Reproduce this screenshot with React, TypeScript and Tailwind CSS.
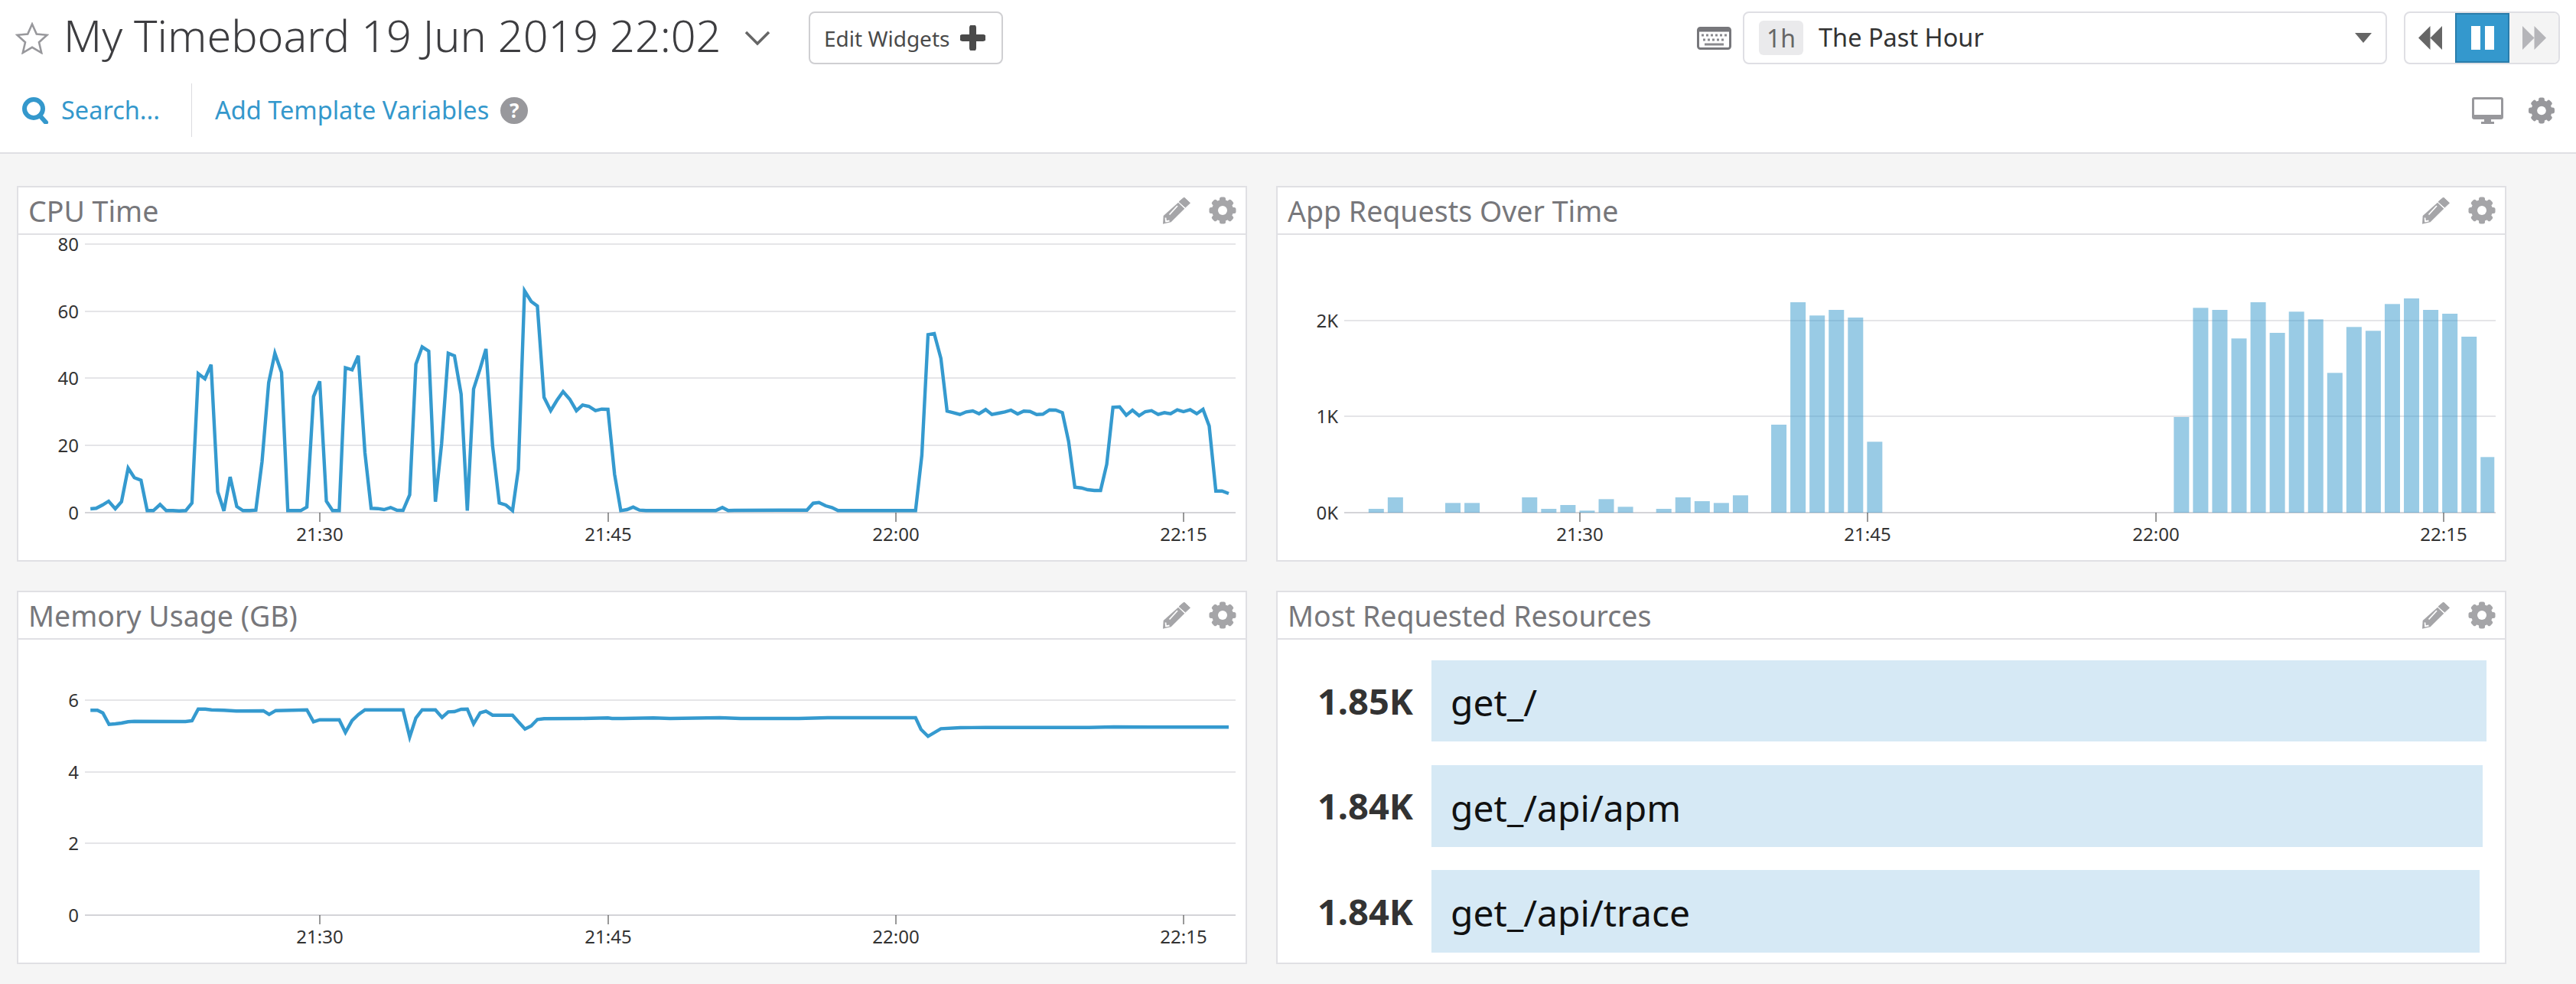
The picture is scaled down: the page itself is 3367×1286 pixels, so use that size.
import type { ReactNode } from "react";

type Pt = [number, number];

const LEFT_X = 1.845;
const toPage = (pts: number[], xBase: number, yBase: number): Pt[] => {
  const out: Pt[] = [];
  for (let i = 0; i < pts.length; i += 2) out.push([xBase + pts[i] / LEFT_X, yBase + pts[i + 1] / 3]);
  return out;
};
const toPoints = (pts: Pt[]) => pts.map(([x, y]) => `${x.toFixed(1)},${y.toFixed(1)}`).join(" ");

const cpu: Pt[] = [
  ...toPage(
    [
      218, 1305, 232, 1303, 247, 1290, 262, 1275, 278, 1305, 293, 1277, 309, 1145, 324, 1183, 340, 1193, 355, 1312,
      370, 1312, 386, 1288, 401, 1312, 417, 1312, 432, 1313, 448, 1312, 463, 1282, 478, 775, 494, 795, 509, 740, 525,
      1238, 540, 1313, 555, 1180, 571, 1296, 586, 1312, 602, 1312, 617, 1310, 632, 1120, 648, 810, 663, 695, 679, 770,
      694, 1312, 710, 1312, 725, 1312, 740, 1298, 756, 865, 771, 805, 787, 1275, 802, 1312, 818, 1312, 833, 752, 849,
      760, 864, 705, 880, 1085, 895, 1303, 911, 1304, 926, 1308, 942, 1300, 957, 1310, 972, 1311, 988, 1250, 1003, 738,
      1018, 670, 1034, 687, 1050, 1277, 1065, 1050, 1081, 695, 1096, 705, 1112, 855, 1127, 1312, 1142, 835, 1158, 755,
      1172, 678, 1188, 1060, 1204, 1282, 1220, 1290, 1236, 1312, 1250, 1150, 1265, 450, 1281, 492, 1296, 510, 1312,
      868, 1328, 920, 1343, 880, 1358, 845, 1374, 875, 1390, 920, 1405, 898, 1420, 903, 1436, 920, 1451, 914, 1466,
      915, 1482, 1170,
    ],
    0,
    230,
  ),
  ...toPage(
    [
      21, 1312, 36, 1308, 51, 1298, 66, 1310, 82, 1312, 250, 1312, 266, 1300, 280, 1312, 295, 1311, 470, 1310, 485,
      1283, 499, 1280, 515, 1293, 530, 1300, 545, 1312, 732, 1312, 747, 1095, 762, 622, 777, 618, 793, 715, 808, 922,
      823, 928, 839, 935, 854, 925, 870, 921, 885, 932, 901, 916, 916, 935, 932, 930, 947, 925, 962, 918, 978, 933,
      993, 922, 1008, 923, 1024, 935, 1039, 934, 1055, 917, 1070, 918, 1086, 928, 1101, 1040, 1116, 1220, 1132, 1223,
      1147, 1230, 1163, 1233, 1178, 1233, 1193, 1130, 1208, 907, 1224, 905, 1240, 938, 1255, 918, 1271, 940, 1286, 924,
      1301, 920, 1317, 935, 1332, 928, 1347, 932, 1363, 917, 1378, 924, 1394, 916, 1410, 932, 1425, 915, 1440, 980,
      1456, 1235, 1471, 1235, 1487, 1245,
    ],
    800,
    230,
  ),
];

const memory: Pt[] = [
  ...toPage(
    [
      218, 505, 235, 505, 248, 515, 263, 560, 278, 558, 293, 555, 309, 550, 324, 548, 447, 549, 463, 546, 478, 500, 495,
      500, 510, 503, 540, 505, 570, 508, 635, 507, 649, 521, 665, 506, 740, 503, 756, 550, 771, 542, 818, 542, 833, 592,
      849, 545, 864, 522, 880, 503, 972, 503, 988, 610, 1003, 535, 1018, 503, 1050, 503, 1066, 533, 1081, 511, 1096,
      510, 1112, 501, 1127, 500, 1142, 558, 1158, 515, 1172, 508, 1188, 524, 1236, 524, 1250, 550, 1266, 578, 1281, 566,
      1296, 541, 1312, 538, 1400, 537, 1466, 535,
    ],
    0,
    760,
  ),
  ...toPage(
    [
      0, 537, 25, 537, 100, 535, 140, 537, 260, 534, 310, 537, 450, 537, 520, 534, 732, 534, 745, 580, 762, 607, 793,
      577, 840, 573, 900, 572, 1150, 572, 1210, 570, 1300, 571, 1487, 571,
    ],
    800,
    760,
  ),
];

// [slot, top] in the crop's scale; empty slots are simply missing
const bars: [number, number][] = [
  [0, 1305], [1, 1260], [4, 1282], [5, 1282], [8, 1260], [9, 1305], [10, 1290], [11, 1312], [12, 1267], [13, 1297],
  [15, 1305], [16, 1260], [17, 1275], [18, 1282], [19, 1252], [21, 975], [22, 495], [23, 547], [24, 525], [25, 555],
  [26, 1042], [42, 945], [43, 517], [44, 525], [45, 637], [46, 495], [47, 615], [48, 532], [49, 562], [50, 772],
  [51, 592], [52, 607], [53, 502], [54, 480], [55, 525], [56, 540], [57, 630], [58, 1102],
];

const resources = [
  { value: "1.85K", name: "get_/", bar: "w-[1379px]", gap: "mt-[27px]", h: "h-[106px]" },
  { value: "1.84K", name: "get_/api/apm", bar: "w-[1374px]", gap: "mt-[31px]", h: "h-[107px]" },
  { value: "1.84K", name: "get_/api/trace", bar: "w-[1370px]", gap: "mt-[30px]", h: "h-[108px]" },
];

function Gear({ className, color = "#a5a5a8" }: { className: string; color?: string }) {
  return (
    <svg viewBox="0 0 36 36" className={className}>
      {[0, 45, 90, 135].map((a) => (
        <rect key={a} x="14" y="0.5" width="8" height="35" rx="2.5" fill={color} transform={`rotate(${a} 18 18)`} />
      ))}
      <circle cx="18" cy="18" r="10" fill="none" stroke={color} strokeWidth="8" />
      <circle cx="18" cy="18" r="6" fill="#fff" />
    </svg>
  );
}

function Pencil() {
  return (
    <svg viewBox="0 0 37 35" className="h-[35px] w-[37px]">
      <path d="M28.7 0 36.5 7.3 30.4 13 22 5.7Z" fill="#a5a5a8" strokeLinejoin="round" stroke="#a5a5a8" />
      <path d="M21 6.7 29.3 14.7 11.6 32.3 1 34.7 1.7 24Z" fill="#a5a5a8" />
      <path d="M20 11 9.5 22.5" stroke="#fff" strokeWidth="1.8" fill="none" />
      <path d="M4.5 26.5 5 31.5 9.5 30.5" stroke="#fff" strokeWidth="1.8" fill="none" />
    </svg>
  );
}

function Widget({ title, height, children }: { title: string; height: string; children: ReactNode }) {
  return (
    <section className={`flex flex-col border-2 border-[#e0e0e4] bg-white ${height}`}>
      <div className="flex h-[62px] shrink-0 items-center justify-between border-b-2 border-[#e0e0e4] pl-[13px] pr-[12px]">
        <span className="pt-[2px] text-[37.5px] text-[#77777b]">{title}</span>
        <div className="flex items-center gap-[24px]">
          <Pencil />
          <Gear className="h-[36px] w-[36px]" />
        </div>
      </div>
      <div className="min-h-0 flex-1">{children}</div>
    </section>
  );
}

type ChartProps = {
  box: string;
  left: number;
  right: number;
  grid: { y: number; label: string }[];
  ticks: { x: number; label: string }[];
  labelY: number;
  children: ReactNode;
};

// viewBox is in page coordinates, so traced values can be used as they are
function Chart({ box, left, right, grid, ticks, labelY, children }: ChartProps) {
  const zero = grid[grid.length - 1].y;
  return (
    <svg viewBox={box} className="block h-full w-full overflow-visible">
      {grid.map((g, i) => (
        <g key={g.label}>
          <line
            x1={left}
            x2={right}
            y1={g.y}
            y2={g.y}
            stroke={i === grid.length - 1 ? "#d4d4d8" : "#dcdce0"}
            strokeWidth={i === grid.length - 1 ? 2 : 1.4}
          />
          <text x={left - 8} y={g.y + 9} textAnchor="end" className="fill-[#333] text-[24px]">
            {g.label}
          </text>
        </g>
      ))}
      {ticks.map((t) => (
        <g key={t.label}>
          <line x1={t.x} x2={t.x} y1={zero} y2={zero + 12} stroke="#333" strokeWidth="1" />
          <text x={t.x} y={labelY} textAnchor="middle" className="fill-[#333] text-[24px]">
            {t.label}
          </text>
        </g>
      ))}
      {children}
    </svg>
  );
}

const Series = ({ pts }: { pts: Pt[] }) => (
  <polyline points={toPoints(pts)} fill="none" stroke="#359acf" strokeWidth="4.4" strokeLinejoin="miter" />
);

const timeLabels = ["21:30", "21:45", "22:00", "22:15"];

export default function App() {
  return (
    <div className="min-h-[1286px] w-[3367px] bg-[#f5f5f5] [font-family:'Noto_Sans',sans-serif]">
      <header className="border-b-2 border-[#dfdfe4] bg-white pb-[20px] pt-[15px]">
        <div className="flex h-[69px] items-center justify-between pl-[20px] pr-[21px]">
          <div className="flex items-center">
            <svg viewBox="0 0 44 42" className="h-[42px] w-[44px]">
              <path
                d="M22 2.5 27.8 15.6 41.5 16.8 31 26.2 34.2 40 22 32.8 9.8 40 13 26.2 2.5 16.8 16.2 15.6Z"
                fill="none"
                stroke="#98989c"
                strokeWidth="2.6"
              />
            </svg>
            <h1 className="ml-[19px] w-[890px] whitespace-nowrap pb-[6px] text-[57.5px] font-light leading-none text-[#3d3d40]">
              My Timeboard 19 Jun 2019 22:02
            </h1>
            <svg viewBox="0 0 34 20" className="h-[20px] w-[34px]">
              <path d="M2 2 17 17 32 2" fill="none" stroke="#666" strokeWidth="3.5" />
            </svg>
            <button className="ml-[50px] flex h-[69px] w-[254px] items-center rounded-lg border-2 border-[#cfcfd2] pl-[18px] text-[28px] text-[#4a4a4a]">
              Edit Widgets
              <svg viewBox="0 0 33 33" className="ml-[14px] h-[33px] w-[33px]">
                <path d="M16.5 3V30M3 16.5H30" stroke="#4a4a4a" strokeWidth="9" strokeLinecap="round" />
              </svg>
            </button>
          </div>
          <div className="flex items-center">
            <svg viewBox="0 0 45 30" className="h-[30px] w-[45px]">
              <rect x="1.5" y="1.5" width="42" height="27" rx="3" fill="#fff" stroke="#77777b" strokeWidth="3" />
              <rect x="1.5" y="1.5" width="42" height="5" fill="#77777b" />
              <path d="M6 11H39M8 17H37" stroke="#8a8a8e" strokeWidth="3" strokeDasharray="3 3" fill="none" />
              <path d="M10 23H35" stroke="#8a8a8e" strokeWidth="3" fill="none" />
            </svg>
            <div className="ml-[15px] flex h-[69px] w-[842px] items-center rounded-lg border-2 border-[#dfdfe4] pl-[19px] pr-[18px]">
              <span className="flex h-[45px] w-[58px] items-center justify-center rounded-md bg-[#eaeaec] text-[32px] text-[#666]">
                1h
              </span>
              <span className="ml-[20px] text-[32.5px] text-[#333]">The Past Hour</span>
              <svg viewBox="0 0 22 13" className="ml-auto h-[13px] w-[22px]">
                <path d="M0 0H22L11 13Z" fill="#666" />
              </svg>
            </div>
            <div className="ml-[22px] flex h-[69px] w-[204px] overflow-hidden rounded-lg border-2 border-[#dfdfe4]">
              <div className="flex w-[65px] items-center justify-center">
                <svg viewBox="0 0 31 31" className="h-[31px] w-[31px]">
                  <path d="M0 15.5 15.5 0V31ZM15.5 15.5 31 0V31Z" fill="#666" />
                </svg>
              </div>
              <div className="flex w-[71px] items-center justify-center border-2 border-[#2a7dab] bg-[#3498cd]">
                <svg viewBox="0 0 30 31" className="h-[31px] w-[30px]">
                  <path d="M0 0H12V31H0ZM18 0H30V31H18Z" fill="#fff" />
                </svg>
              </div>
              <div className="flex flex-1 items-center justify-center bg-[#f4f4f4]">
                <svg viewBox="0 0 31 31" className="h-[31px] w-[31px]">
                  <path d="M0 0 15.5 15.5 0 31ZM15.5 0 31 15.5 15.5 31Z" fill="#b5b5b9" />
                </svg>
              </div>
            </div>
          </div>
        </div>
        <div className="mt-[25px] flex h-[70px] items-center justify-between pl-[29px] pr-[27px]">
          <div className="flex h-full items-center text-[32.5px] text-[#3498cc]">
            <svg viewBox="0 0 35 35" className="h-[35px] w-[35px]">
              <circle cx="15" cy="15" r="12" fill="none" stroke="#3498cc" strokeWidth="6" />
              <path d="M23 24 31 33" stroke="#3498cc" strokeWidth="6" strokeLinecap="round" />
            </svg>
            <span className="ml-[16px]">Search...</span>
            <div className="ml-[41px] h-full w-px bg-[#dcdce0]" />
            <span className="ml-[30px]">Add Template Variables</span>
            <span className="ml-[15px] flex h-[35px] w-[36px] items-center justify-center rounded-full bg-[#98989c] text-[26px] font-bold text-white">
              ?
            </span>
          </div>
          <div className="flex items-center gap-[32px]">
            <svg viewBox="0 0 41 35" className="h-[35px] w-[41px]">
              <path d="M3 0H38Q41 0 41 3V26Q41 29 38 29H25V32H29V35H12V32H16V29H3Q0 29 0 26V3Q0 0 3 0Z" fill="#98989c" />
              <rect x="3" y="3" width="35" height="20" fill="#fff" />
            </svg>
            <Gear className="h-[35px] w-[36px]" color="#98989c" />
          </div>
        </div>
      </header>

      <main className="grid grid-cols-[1608px_1608px] gap-[38px] pl-[22px] pt-[42px]">
        <Widget title="CPU Time" height="h-[491px]">
          <Chart
            box="24 307 1604 425"
            left={111}
            right={1615}
            labelY={707}
            grid={[
              { y: 319, label: "80" },
              { y: 407, label: "60" },
              { y: 494, label: "40" },
              { y: 582, label: "20" },
              { y: 670, label: "0" },
            ]}
            ticks={[418, 795, 1171, 1547].map((x, i) => ({ x, label: timeLabels[i] }))}
          >
            <Series pts={cpu} />
          </Chart>
        </Widget>

        <Widget title="App Requests Over Time" height="h-[491px]">
          <Chart
            box="1670 307 1604 425"
            left={1757}
            right={3262}
            labelY={707}
            grid={[
              { y: 419, label: "2K" },
              { y: 544, label: "1K" },
              { y: 670, label: "0K" },
            ]}
            ticks={[2065, 2441, 2818, 3194].map((x, i) => ({ x, label: timeLabels[i] }))}
          >
            {bars.map(([slot, top]) => {
              const x = 1788.8 + slot * 25.06;
              const y = 230 + top / 3;
              return (
                <rect
                  key={slot}
                  x={x}
                  y={y}
                  width={slot === 58 ? 18 : 20}
                  height={670 - y}
                  fill="#3498cc"
                  fillOpacity="0.5"
                />
              );
            })}
          </Chart>
        </Widget>

        <Widget title="Memory Usage (GB)" height="h-[488px]">
          <Chart
            box="24 836 1604 422"
            left={111}
            right={1615}
            labelY={1233}
            grid={[
              { y: 915, label: "6" },
              { y: 1009, label: "4" },
              { y: 1102, label: "2" },
              { y: 1196, label: "0" },
            ]}
            ticks={[418, 795, 1171, 1547].map((x, i) => ({ x, label: timeLabels[i] }))}
          >
            <Series pts={memory} />
          </Chart>
        </Widget>

        <Widget title="Most Requested Resources" height="h-[488px]">
          {resources.map((r) => (
            <div key={r.name} className={`flex items-center ${r.gap} ${r.h}`}>
              <span className="w-[177px] text-right text-[47px] font-bold text-[#333]">{r.value}</span>
              <div className={`ml-[24px] flex h-full items-center bg-[#d6e9f5] pl-[25px] pt-[4px] text-[48px] text-[#111] ${r.bar}`}>
                {r.name}
              </div>
            </div>
          ))}
        </Widget>
      </main>
    </div>
  );
}
